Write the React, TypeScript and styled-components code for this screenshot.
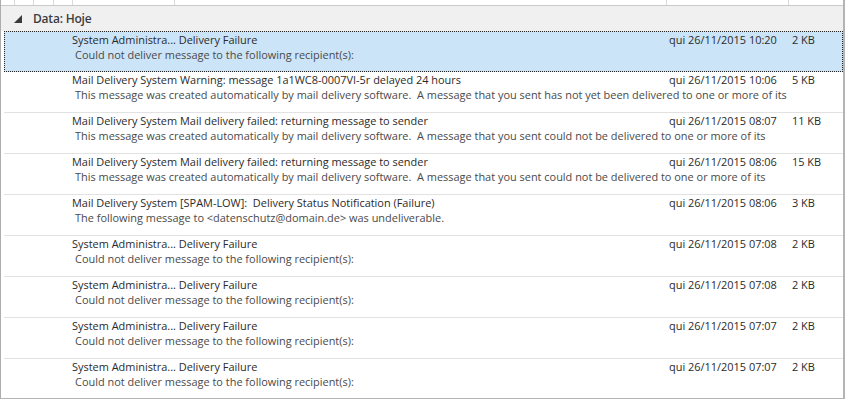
import React from "react";
import styled, { createGlobalStyle } from "styled-components";

const Global = createGlobalStyle`
  html, body { margin: 0; padding: 0; background: #ffffff; }
  body { font-family: "Open Sans", "Noto Sans", sans-serif; }
`;

const Frame = styled.div`
  width: 845px;
  height: 399px;
  box-sizing: border-box;
  border-left: 1px solid #adadad;
  border-right: 2px solid #b4b4b4;
  border-bottom: 1px solid #b4b4b4;
  overflow: hidden;
  display: flex;
  flex-direction: column;
  background: #fff;
`;

const HeaderStrip = styled.div`
  height: 5px;
  flex: none;
  display: flex;
  border-bottom: 1px solid #c9c9c9;
  background: #fff;
`;

const HeaderCell = styled.div<{ $w: number; $last?: boolean }>`
  width: ${(p) => p.$w}px;
  flex: ${(p) => (p.$last ? "1" : "none")};
  box-sizing: border-box;
  border-right: ${(p) => (p.$last ? "none" : "1px solid #dadada")};
`;

const Group = styled.div`
  height: 25px;
  flex: none;
  display: flex;
  align-items: center;
  background: #f0f0f0;
  padding-left: 13px;
  gap: 11px;
`;

const Triangle = styled.svg`
  width: 8px;
  height: 8px;
  margin-top: 1px;
`;

const GroupLabel = styled.span`
  font-size: 12px;
  font-weight: 600;
  color: #3c3c3c;
  letter-spacing: -0.2px;
`;

const Row = styled.div<{ $selected?: boolean }>`
  height: 41px;
  flex: none;
  box-sizing: border-box;
  margin-left: 3px;
  display: flex;
  flex-direction: column;
  padding: 0 0 0 68px;
  background: ${(p) => (p.$selected ? "#cce4f7" : "#fff")};
  border: ${(p) => (p.$selected ? "1px dotted #222" : "none")};
  border-bottom: ${(p) => (p.$selected ? "1px dotted #222" : "1px solid #e2e2e2")};
  ${(p) => (p.$selected ? "padding-left: 67px;" : "")}
`;

const Line = styled.div`
  display: flex;
  align-items: baseline;
  height: 15px;
  font-size: 10.95px;
  white-space: nowrap;
`;

const Subject = styled.span`
  width: 597px;
  flex: none;
  color: #2a2a2a;
  overflow: hidden;
`;

const DateCell = styled.span`
  width: 123px;
  flex: none;
  color: #2a2a2a;
`;

const Size = styled.span`
  color: #2a2a2a;
`;

const Preview = styled.div`
  height: 15px;
  padding-left: 3px;
  font-size: 10.95px;
  color: #4a4a4a;
  white-space: nowrap;
  overflow: hidden;
`;

type Msg = { subject: string; preview: string; date: string; size: string };

const could = "Could not deliver message to the following recipient(s):";
const auto1 =
  "This message was created automatically by mail delivery software.\u00a0 A message that you sent has not yet been delivered to one or more of its";
const auto2 =
  "This message was created automatically by mail delivery software.\u00a0 A message that you sent could not be delivered to one or more of its";

const messages: Msg[] = [
  { subject: "System Administra... Delivery Failure", preview: could, date: "qui 26/11/2015 10:20", size: "2 KB" },
  { subject: "Mail Delivery System Warning: message 1a1WC8-0007VI-5r delayed 24 hours", preview: auto1, date: "qui 26/11/2015 10:06", size: "5 KB" },
  { subject: "Mail Delivery System Mail delivery failed: returning message to sender", preview: auto2, date: "qui 26/11/2015 08:07", size: "11 KB" },
  { subject: "Mail Delivery System Mail delivery failed: returning message to sender", preview: auto2, date: "qui 26/11/2015 08:06", size: "15 KB" },
  { subject: "Mail Delivery System [SPAM-LOW]:\u00a0 Delivery Status Notification (Failure)", preview: "The following message to <datenschutz@domain.de> was undeliverable.", date: "qui 26/11/2015 08:06", size: "3 KB" },
  { subject: "System Administra... Delivery Failure", preview: could, date: "qui 26/11/2015 07:08", size: "2 KB" },
  { subject: "System Administra... Delivery Failure", preview: could, date: "qui 26/11/2015 07:08", size: "2 KB" },
  { subject: "System Administra... Delivery Failure", preview: could, date: "qui 26/11/2015 07:07", size: "2 KB" },
  { subject: "System Administra... Delivery Failure", preview: could, date: "qui 26/11/2015 07:07", size: "2 KB" },
];

const columns = [14, 19, 20, 19, 102, 492, 122, 0];

export default function App() {
  return (
    <>
      <Global />
      <Frame>
        <HeaderStrip>
          {columns.map((w, i) => (
            <HeaderCell key={i} $w={w} $last={i === columns.length - 1} />
          ))}
        </HeaderStrip>
        <Group>
          <Triangle viewBox="0 0 8 8">
            <polygon points="8,0 8,8 0,8" fill="#3a3a3a" />
          </Triangle>
          <GroupLabel>Data: Hoje</GroupLabel>
        </Group>
        {messages.map((m, i) => (
          <Row key={i} $selected={i === 0}>
            <Line>
              <Subject>{m.subject}</Subject>
              <DateCell>{m.date}</DateCell>
              <Size>{m.size}</Size>
            </Line>
            <Preview>{m.preview}</Preview>
          </Row>
        ))}
      </Frame>
    </>
  );
}
